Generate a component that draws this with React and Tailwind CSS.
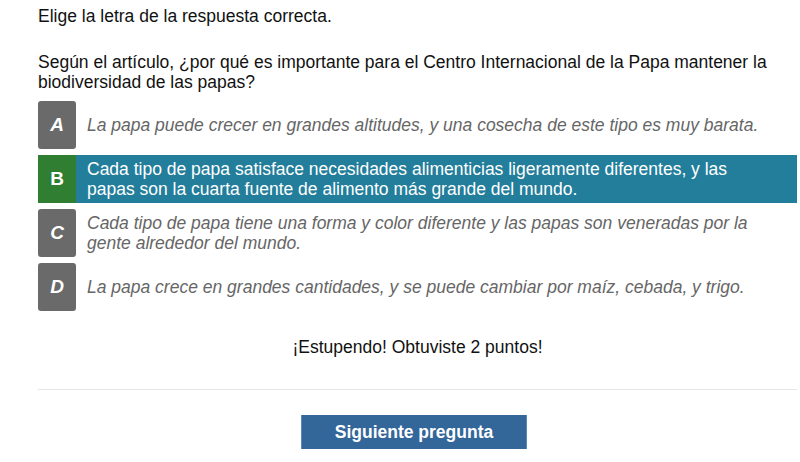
import React from 'react';

const options = [
  { key: 'A', text: 'La papa puede crecer en grandes altitudes, y una cosecha de este tipo es muy barata.' },
  { key: 'B', text: 'Cada tipo de papa satisface necesidades alimenticias ligeramente diferentes, y las papas son la cuarta fuente de alimento más grande del mundo.', selected: true },
  { key: 'C', text: 'Cada tipo de papa tiene una forma y color diferente y las papas son veneradas por la gente alrededor del mundo.' },
  { key: 'D', text: 'La papa crece en grandes cantidades, y se puede cambiar por maíz, cebada, y trigo.' },
];

const Option = ({ item }) => (
  <div className={`flex h-[48px] ${item.selected ? 'bg-[#227e9b]' : ''}`}>
    <div
      className={`w-[38px] shrink-0 flex items-center justify-center text-white font-bold text-[19px] ${
        item.selected ? 'bg-[#2f7e31]' : 'bg-[#6a6a6a] rounded-[3px] italic'
      }`}
    >
      {item.key}
    </div>
    <div
      className={`flex items-center pl-[11px] pr-[36px] ${
        item.selected ? 'text-white' : 'text-[#666666] italic'
      }`}
    >
      {item.text}
    </div>
  </div>
);

export default function App() {
  return (
    <div className="bg-white min-h-[462px] pl-[38px] pr-[3px] pt-[6px] font-['Liberation_Sans',Arial,sans-serif] text-[17.5px] leading-[20px] text-[#111111]">
      <p className="mb-[26px]">Elige la letra de la respuesta correcta.</p>
      <p className="mb-[9px]">
        Según el artículo, ¿por qué es importante para el Centro Internacional de la Papa mantener la biodiversidad de las papas?
      </p>

      <div className="flex flex-col gap-[6px]">
        {options.map((item) => (
          <Option key={item.key} item={item} />
        ))}
      </div>

      <p className="mt-[26px] text-center">¡Estupendo! Obtuviste 2 puntos!</p>

      <div className="mt-[32px] h-px bg-[#e6e6e6]" />

      <button className="mt-[25px] ml-[263px] w-[226px] h-[34px] bg-[#336699] border-x border-[#5a88b6] text-white font-bold">
        Siguiente pregunta
      </button>
    </div>
  );
}
